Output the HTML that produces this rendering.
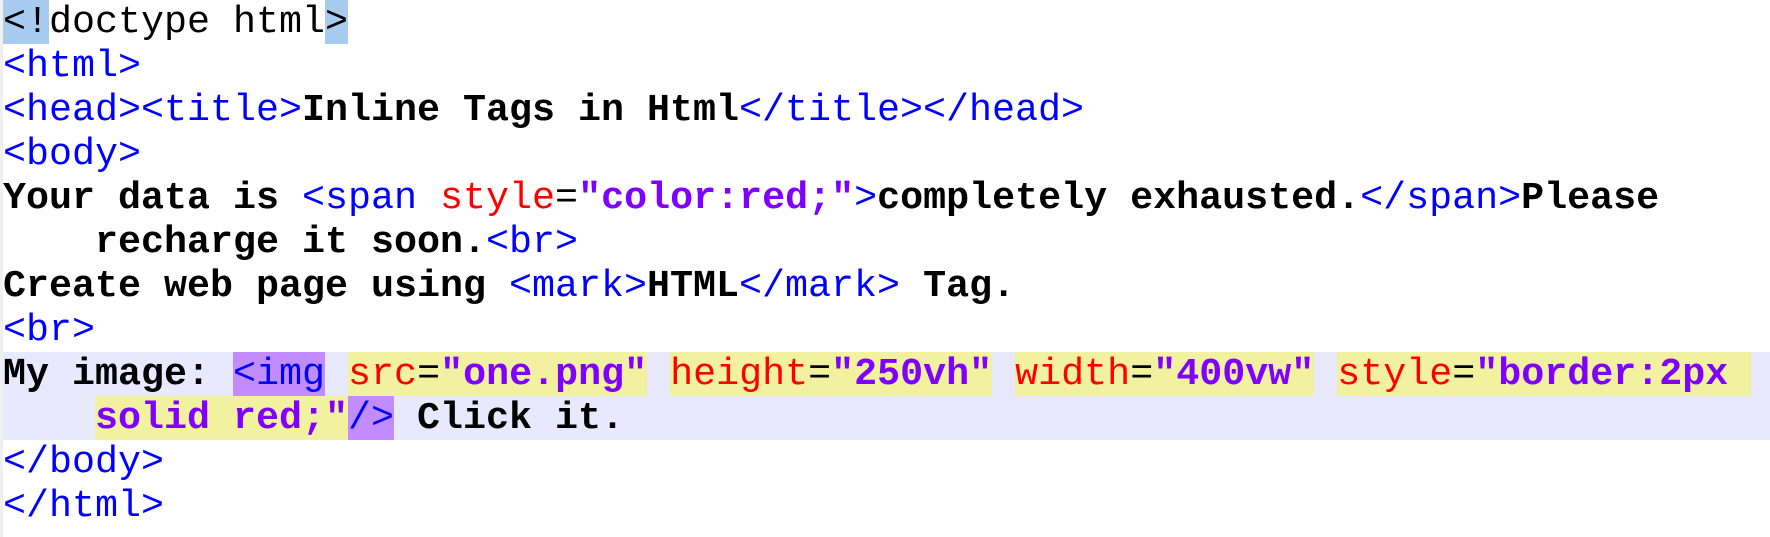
<!DOCTYPE html>
<html><head><style>
html,body{margin:0;padding:0;background:#fff;width:1770px;height:537px;overflow:hidden}
.m{position:absolute;left:0;top:0;width:3px;height:537px;background:#f0f0f0}
.c{position:absolute;left:3px;top:0;font-family:"Liberation Mono","Courier New",monospace;font-size:38.33px}
.l{height:44px;line-height:44px;white-space:pre;width:1767px}
.cur{background:#e8e8ff}
.t{color:#0000ff}
.a{color:#ff0000}
.v{color:#8000ff;font-weight:bold}
.b{font-weight:bold;color:#000}
.s{background:#a8cbf0}
.y{background:#f2f1a0}
.p{background:#c08cff}
</style></head><body>
<div class="m"></div>
<div class="c">
<div class="l"><span class="s">&lt;!</span>doctype html<span class="s">&gt;</span></div>
<div class="l"><span class="t">&lt;html&gt;</span></div>
<div class="l"><span class="t">&lt;head&gt;&lt;title&gt;</span><span class="b">Inline Tags in Html</span><span class="t">&lt;/title&gt;&lt;/head&gt;</span></div>
<div class="l"><span class="t">&lt;body&gt;</span></div>
<div class="l"><span class="b">Your data is </span><span class="t">&lt;span </span><span class="a">style</span>=<span class="v">"color:red;"</span><span class="t">&gt;</span><span class="b">completely exhausted.</span><span class="t">&lt;/span&gt;</span><span class="b">Please</span></div>
<div class="l"><span class="b">    recharge it soon.</span><span class="t">&lt;br&gt;</span></div>
<div class="l"><span class="b">Create web page using </span><span class="t">&lt;mark&gt;</span><span class="b">HTML</span><span class="t">&lt;/mark&gt;</span><span class="b"> Tag.</span></div>
<div class="l"><span class="t">&lt;br&gt;</span></div>
<div class="l cur"><span class="b">My image: </span><span class="t p">&lt;img</span> <span class="y"><span class="a">src</span>=<span class="v">"one.png"</span></span> <span class="y"><span class="a">height</span>=<span class="v">"250vh"</span></span> <span class="y"><span class="a">width</span>=<span class="v">"400vw"</span></span> <span class="y"><span class="a">style</span>=<span class="v">"border:2px </span></span></div>
<div class="l cur">    <span class="y"><span class="v">solid red;"</span></span><span class="t p">/&gt;</span><span class="b"> Click it.</span></div>
<div class="l"><span class="t">&lt;/body&gt;</span></div>
<div class="l"><span class="t">&lt;/html&gt;</span></div>
</div>
</body></html>
